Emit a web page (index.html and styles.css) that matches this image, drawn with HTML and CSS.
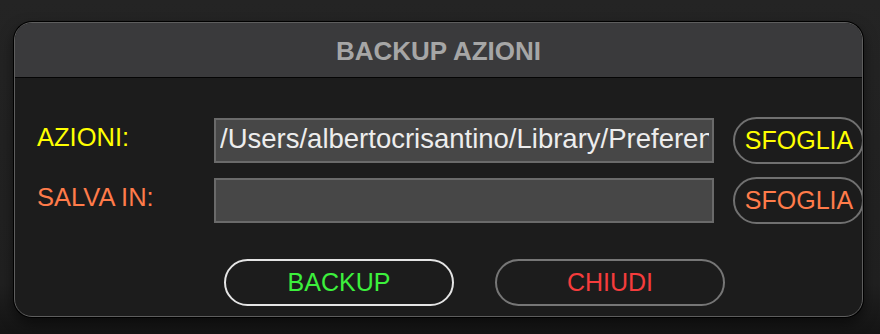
FILE: index.html
```html
<!DOCTYPE html>
<html lang="it">
<head>
  <meta charset="UTF-8">
  <title>Backup Azioni</title>
  <link rel="stylesheet" href="styles.css">
</head>
<body>
  <div class="window">
    <div class="titlebar">BACKUP AZIONI</div>
    <div class="content">
      <div class="form-grid">
        <label class="field-label azioni" for="azioni">AZIONI:</label>
        <input class="path-field" type="text" id="azioni" value="/Users/albertocrisantino/Library/Preferences/Adobe Photoshop/Actions" readonly>
        <button class="browse-btn azioni">SFOGLIA</button>

        <label class="field-label salva" for="salva">SALVA IN:</label>
        <input class="path-field" type="text" id="salva" value="" readonly>
        <button class="browse-btn salva">SFOGLIA</button>
      </div>
      <div class="actions">
        <button class="action-btn backup">BACKUP</button>
        <button class="action-btn close">CHIUDI</button>
      </div>
    </div>
  </div>
</body>
</html>
```

FILE: styles.css
```css
html, body { margin: 0; height: 100%; }
body { background: linear-gradient(#242424, #202020 85%, #141414); font-family: "Liberation Sans", Arial, sans-serif; padding: 22px 0 0 14px; box-sizing: border-box; overflow: hidden; }
.window { width: 849px; height: 295px; box-sizing: border-box; background: #1c1c1c; border: 1px solid #5e5e5e; border-radius: 18px; box-shadow: 0 0 0 1px #000, 0 6px 14px rgba(0,0,0,0.55); overflow: hidden; }
.titlebar { height: 55px; background: #3a3a3c; border-bottom: 1px solid #050505; color: #a6a6a6; font-weight: bold; font-size: 26px; display: flex; align-items: center; justify-content: center; padding-top: 2px; box-sizing: border-box; }
.content { padding: 39px 0 0 22px; }
.form-grid { display: grid; grid-template-columns: 177px 500px 131px; row-gap: 13px; align-items: center; }
.field-label { font-size: 25.5px; line-height: 1; padding-bottom: 5px; }
.field-label.azioni, .browse-btn.azioni { color: #ffff00; }
.field-label.salva, .browse-btn.salva { color: #ff7b4a; }
.path-field { height: 45px; width: 500px; box-sizing: border-box; background: #474747; border: 2px solid #6a6a6a; color: #ededed; font-family: inherit; font-size: 27.5px; padding: 0 3px 2px 4px; outline: none; margin-top: -1px; }
.browse-btn { margin-left: 19px; width: 131px; height: 47px; box-sizing: border-box; background: #1c1c1c; border: 2px solid #707070; border-radius: 24px; font-family: inherit; font-size: 25px; padding: 0 0 0 1px; cursor: pointer; }
.actions { display: flex; gap: 41px; padding-left: 187px; margin-top: 35px; }
.action-btn { width: 230px; height: 47px; box-sizing: border-box; background: #1c1c1c; border: 2px solid #767676; border-radius: 24px; font-family: inherit; font-size: 25px; cursor: pointer; }
.action-btn.backup { border-color: #e4e4e4; color: #3cf03c; }
.action-btn.close { color: #f53c3c; }
```
